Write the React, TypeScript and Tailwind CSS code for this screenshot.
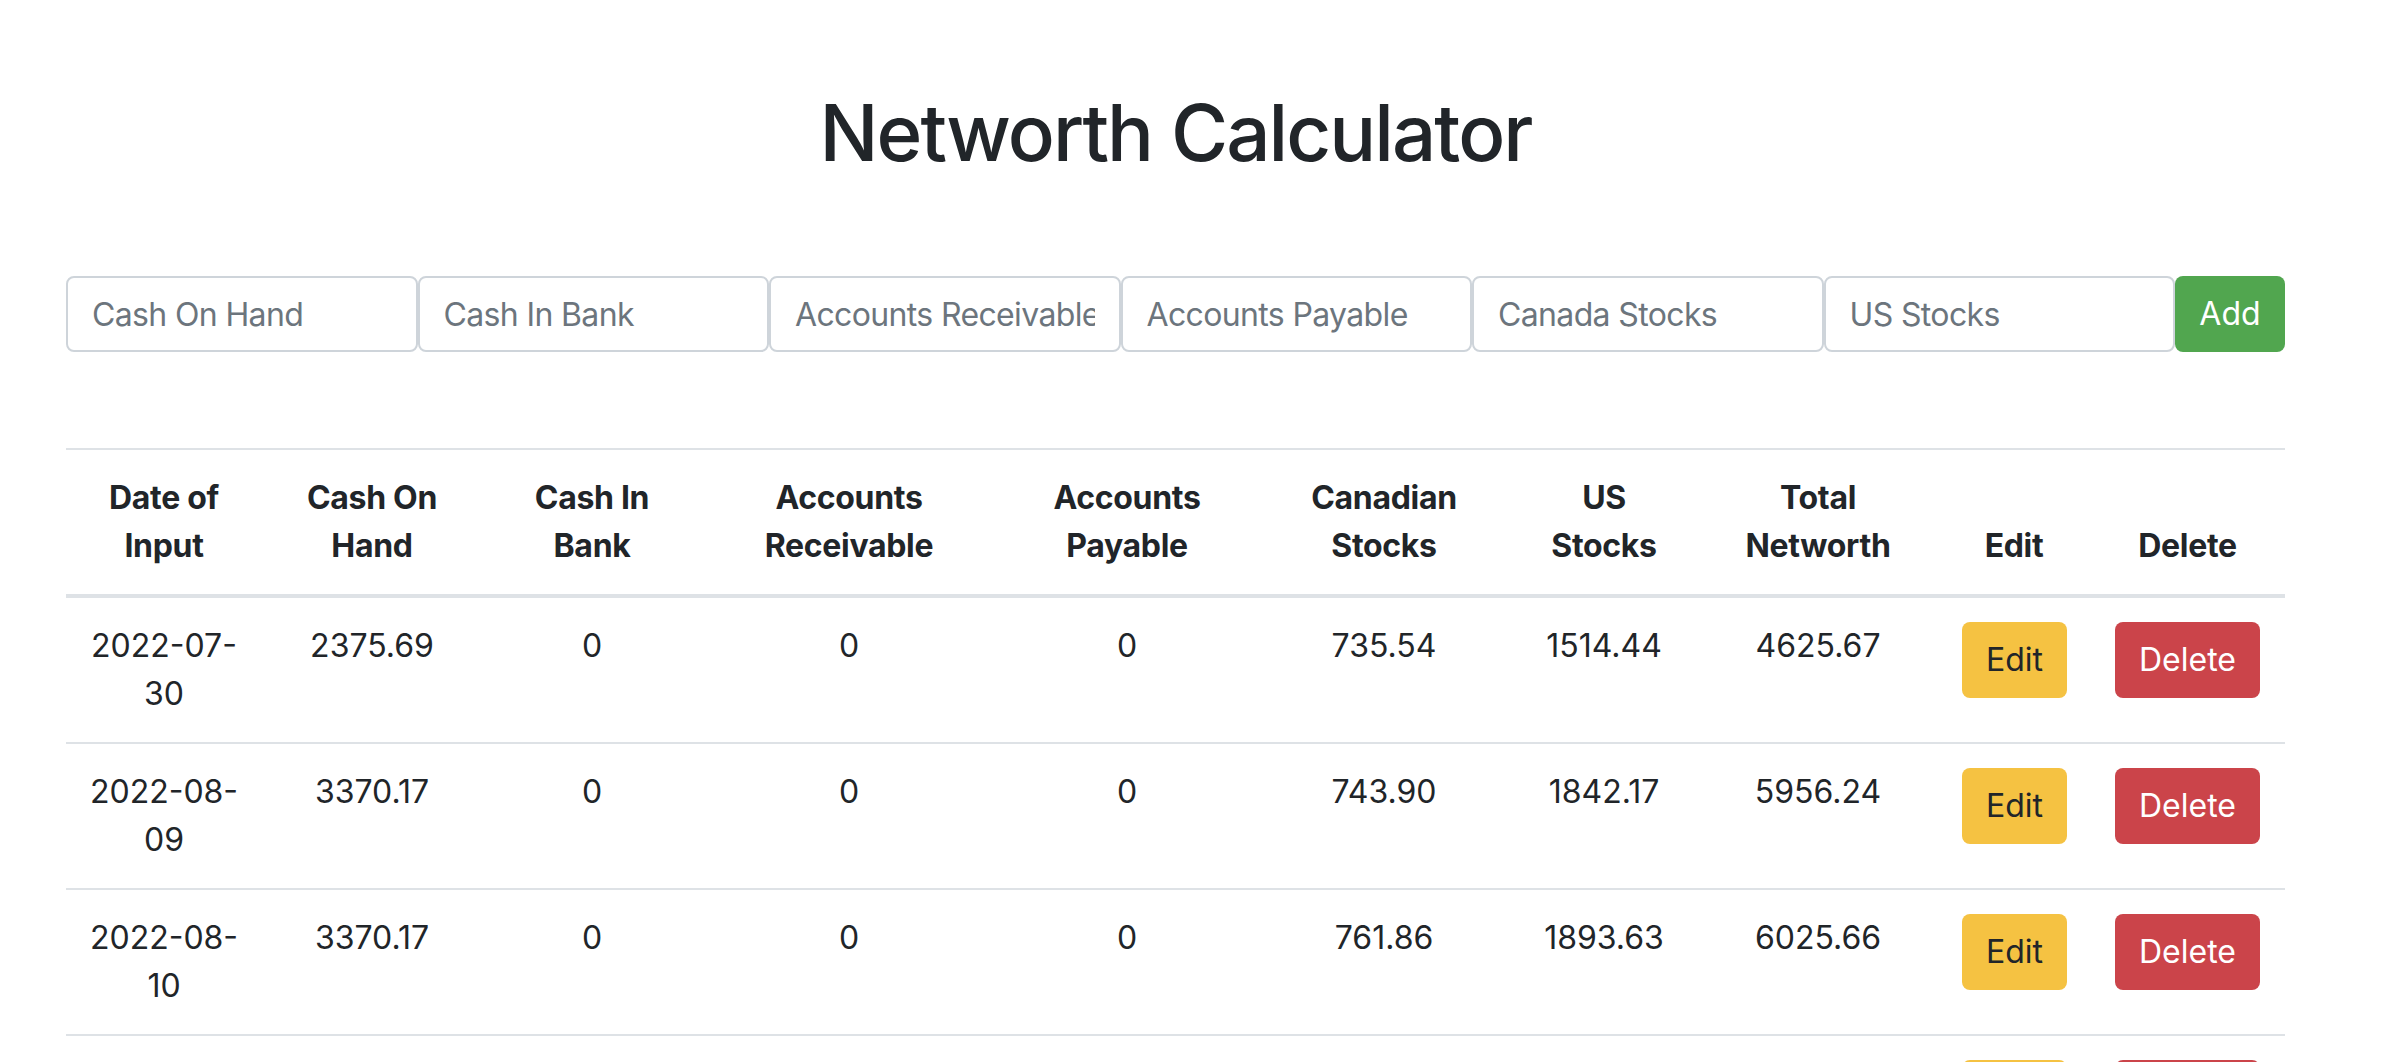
const fields = [
  "Cash On Hand",
  "Cash In Bank",
  "Accounts Receivable",
  "Accounts Payable",
  "Canada Stocks",
  "US Stocks",
];

const columns = [
  { label: "Date of Input", w: "w-[196px]" },
  { label: "Cash On Hand", w: "w-[220px]" },
  { label: "Cash In Bank", w: "w-[220px]" },
  { label: "Accounts Receivable", w: "w-[294px]" },
  { label: "Accounts Payable", w: "w-[262px]" },
  { label: "Canadian Stocks", w: "w-[252px]" },
  { label: "US Stocks", w: "w-[188px]" },
  { label: "Total Networth", w: "w-[240px]" },
  { label: "Edit", w: "w-[152px]" },
  { label: "Delete", w: "w-[195px]" },
];

type Entry = {
  date: string;
  cashOnHand: string;
  cashInBank: string;
  receivable: string;
  payable: string;
  canadian: string;
  us: string;
  total: string;
};

const entries: Entry[] = [
  { date: "2022-07-30", cashOnHand: "2375.69", cashInBank: "0", receivable: "0", payable: "0", canadian: "735.54", us: "1514.44", total: "4625.67" },
  { date: "2022-08-09", cashOnHand: "3370.17", cashInBank: "0", receivable: "0", payable: "0", canadian: "743.90", us: "1842.17", total: "5956.24" },
  { date: "2022-08-10", cashOnHand: "3370.17", cashInBank: "0", receivable: "0", payable: "0", canadian: "761.86", us: "1893.63", total: "6025.66" },
  { date: "2022-08-12", cashOnHand: "3370.17", cashInBank: "0", receivable: "0", payable: "0", canadian: "758.20", us: "1880.41", total: "6008.78" },
];

const App = () => {
  return (
    <div className="min-h-screen bg-white text-[#212529] font-['Inter',sans-serif] text-[32px] leading-[48px]">
      <div className="ml-[66px] w-[2219px] pt-[85px]">
        <h1 className="text-center text-[78px] leading-[96px] font-medium tracking-[-0.025em]">Networth Calculator</h1>

        <div className="mt-[95px] flex">
          {fields.map((f) => (
            <input
              key={f}
              placeholder={f}
              className="min-w-0 flex-1 h-[76px] px-[24px] border-2 border-[#ced4da] rounded-[8px] bg-white text-[32px] tracking-[-0.02em] text-[#495057] placeholder:text-[#6c757d] outline-none"
            />
          ))}
          <button className="w-[110px] h-[76px] rounded-[8px] bg-[#51a64f] text-white text-[32px]">Add</button>
        </div>

        <table className="mt-[96px] w-full table-fixed border-collapse text-center">
          <thead>
            <tr className="border-t-2 border-b-4 border-[#dee2e6]">
              {columns.map((c) => (
                <th key={c.label} className={`${c.w} p-[24px] align-bottom font-bold tracking-[-0.01em]`}>
                  {c.label}
                </th>
              ))}
            </tr>
          </thead>
          <tbody>
            {entries.map((e) => (
              <tr key={e.date} className="border-b-2 border-[#dee2e6]">
                <td className="py-[24px] px-[16px] align-top">{e.date}</td>
                <td className="p-[24px] align-top">{e.cashOnHand}</td>
                <td className="p-[24px] align-top">{e.cashInBank}</td>
                <td className="p-[24px] align-top">{e.receivable}</td>
                <td className="p-[24px] align-top">{e.payable}</td>
                <td className="p-[24px] align-top">{e.canadian}</td>
                <td className="p-[24px] align-top">{e.us}</td>
                <td className="p-[24px] align-top">{e.total}</td>
                <td className="p-[24px] align-top">
                  <button className="h-[76px] px-[24px] rounded-[8px] bg-[#f5c242] text-[#212529]">Edit</button>
                </td>
                <td className="p-[24px] align-top">
                  <button className="h-[76px] px-[24px] rounded-[8px] bg-[#cb444a] text-white">Delete</button>
                </td>
              </tr>
            ))}
          </tbody>
        </table>
      </div>
    </div>
  );
};

export default App;
